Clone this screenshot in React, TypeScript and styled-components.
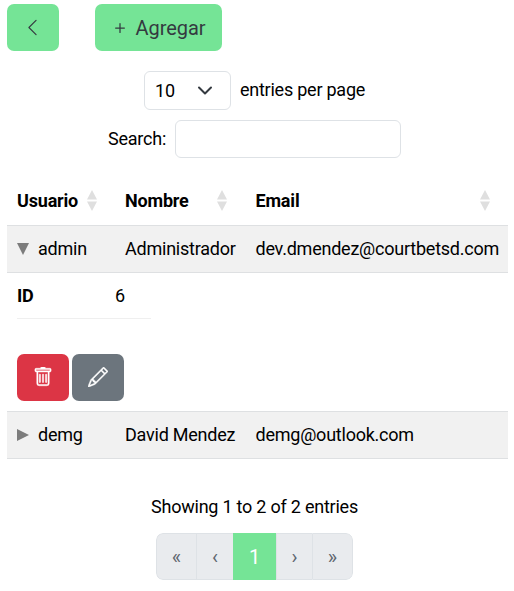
import React from "react";
import styled, { createGlobalStyle } from "styled-components";
import { BsChevronLeft, BsPlus, BsTrash, BsPencil } from "react-icons/bs";

const GlobalStyle = createGlobalStyle`
  *, *::before, *::after { box-sizing: border-box; }
  body {
    margin: 0;
    background: #fff;
    color: #000;
    font: 400 18px/27px Roboto, sans-serif;
    letter-spacing: -0.23px;
  }
`;

const Page = styled.main`
  width: 514px;
  height: 591px;
  padding: 4px 6px 0 7px;
  overflow: hidden;
`;

const Toolbar = styled.div`
  display: flex;
  gap: 36px;
`;

const Button = styled.button<{ $tone: string; $ink: string; $width: number }>`
  display: inline-flex;
  align-items: center;
  justify-content: center;
  gap: 5px;
  width: ${(p) => p.$width}px;
  height: 47px;
  padding: 0 1px 0 0;
  border: 0;
  border-radius: 7px;
  background: ${(p) => p.$tone};
  color: ${(p) => p.$ink};
  font: 400 20px/30px Roboto, sans-serif;
  letter-spacing: -0.05px;
`;

const ActionButton = styled(Button)`
  padding: 0 0 2px;

  svg {
    stroke: currentColor;
    stroke-width: 0.35px;
  }
`;

const Controls = styled.div`
  display: flex;
  flex-direction: column;
  align-items: center;
  gap: 10px;
  width: 495px;
  margin-top: 20px;
`;

const Control = styled.label`
  display: flex;
  align-items: center;
  gap: 9px;
`;

const ControlText = styled.span`
  padding-bottom: 2px;
`;

const LengthSelect = styled.span`
  display: flex;
  align-items: center;
  justify-content: space-between;
  width: 87px;
  height: 39px;
  padding: 0 17px 1px 10px;
  border: 1px solid #dee2e6;
  border-radius: 6px;
  letter-spacing: 0;
`;

const SearchInput = styled.input`
  width: 226px;
  height: 38px;
  border: 1px solid #dee2e6;
  border-radius: 6px;
  background: #fff;
`;

const Table = styled.div`
  width: 501px;
  margin-top: 19px;
`;

const Row = styled.div<{ $striped?: boolean }>`
  display: grid;
  grid-template-columns: 108px 130.5px 262.5px;
  height: 48px;
  border-top: 1px solid ${(p) => (p.$striped ? "#dee0e2" : "transparent")};
  border-bottom: ${(p) => (p.$striped ? "1px solid #dee0e2" : "0")};
  background: ${(p) => (p.$striped ? "#f1f1f1" : "#fff")};
`;

const Cell = styled.div`
  display: flex;
  align-items: center;
  padding: 0 10px 2px;
  white-space: nowrap;
`;

const HeadCell = styled(Cell)<{ $inset: number }>`
  justify-content: space-between;
  padding-right: ${(p) => p.$inset}px;
  font-weight: 700;
  letter-spacing: -0.18px;
`;

const Toggle = styled.svg`
  flex: none;
  margin-right: 9px;
  transform: translateY(1px);
`;

const Details = styled.div`
  height: 138px;
  padding: 0 10px;
`;

const DetailItem = styled.div`
  display: flex;
  width: 134px;
  height: 46px;
  padding-top: 9px;
  border-bottom: 1px solid #efefef;
`;

const DetailTitle = styled.strong`
  width: 98px;
  font-weight: 700;
`;

const Actions = styled.div`
  display: flex;
  gap: 3px;
  margin-top: 35px;
`;

const Footer = styled.footer`
  display: flex;
  flex-direction: column;
  align-items: center;
  width: 495px;
  margin-top: 34px;
`;

const Pagination = styled.nav`
  display: flex;
  width: 197px;
  height: 47px;
  margin-top: 13px;
  overflow: hidden;
  border-radius: 7px;
`;

const PageItem = styled.button<{ $active?: boolean; $width: number }>`
  width: ${(p) => p.$width}px;
  padding: 0;
  border: 1px solid ${(p) => (p.$active ? "#75e496" : "#dee2e6")};
  border-right-width: ${(p) => (p.$active ? 1 : 0)}px;
  background: ${(p) => (p.$active ? "#75e496" : "#e9ebee")};
  color: ${(p) => (p.$active ? "#fff" : "#5e666e")};
  font: 400 20px/30px Roboto, sans-serif;

  &:first-child { border-radius: 7px 0 0 7px; }
  &:last-child { border-right-width: 1px; border-radius: 0 7px 7px 0; }
`;

const SortIcon = () => (
  <svg width="10" height="21" viewBox="0 0 10 21" fill="#dfdfdf">
    <path d="M5 0 10 9.5H0zM0 11.5h10L5 21z" />
  </svg>
);

const columns = [
  { name: "Usuario", inset: 18 },
  { name: "Nombre", inset: 18.5 },
  { name: "Email", inset: 18 },
];

const users = [
  { user: "admin", name: "Administrador", email: "dev.dmendez@courtbetsd.com", id: "6", open: true },
  { user: "demg", name: "David Mendez", email: "demg@outlook.com", id: "7", open: false },
];

const pages = [
  { label: "«", width: 40 },
  { label: "‹", width: 37 },
  { label: "1", width: 43, active: true },
  { label: "›", width: 36 },
  { label: "»", width: 41 },
];

export default function App() {
  return (
    <>
      <GlobalStyle />
      <Page>
        <Toolbar>
          <Button $tone="#75e496" $ink="#343a40" $width={52} aria-label="Volver">
            <BsChevronLeft size={19} />
          </Button>
          <Button $tone="#75e496" $ink="#343a40" $width={127}>
            <BsPlus size={20} />
            Agregar
          </Button>
        </Toolbar>

        <Controls>
          <Control>
            <LengthSelect>
              10
              <svg width="16" height="16" viewBox="0 0 16 16" fill="none" stroke="#343a40" strokeWidth="2" strokeLinecap="round" strokeLinejoin="round">
                <path d="m2 5.5 6 6 6-6" />
              </svg>
            </LengthSelect>
            <ControlText>entries per page</ControlText>
          </Control>
          <Control>
            <ControlText>Search:</ControlText>
            <SearchInput type="search" aria-label="Search" />
          </Control>
        </Controls>

        <Table>
          <Row>
            {columns.map((c) => (
              <HeadCell key={c.name} $inset={c.inset}>
                {c.name}
                <SortIcon />
              </HeadCell>
            ))}
          </Row>
          {users.map((u) => (
            <React.Fragment key={u.user}>
              <Row $striped>
                <Cell>
                  <Toggle width="12" height="12" viewBox="0 0 12 12" fill="#7c7c7c">
                    <path d={u.open ? "M0 0h12L6 12z" : "M0 0l12 6-12 6z"} />
                  </Toggle>
                  {u.user}
                </Cell>
                <Cell>{u.name}</Cell>
                <Cell>{u.email}</Cell>
              </Row>
              {u.open && (
                <Details>
                  <DetailItem>
                    <DetailTitle>ID</DetailTitle>
                    {u.id}
                  </DetailItem>
                  <Actions>
                    <ActionButton $tone="#dc3545" $ink="#fff" $width={52} aria-label="Eliminar">
                      <BsTrash size={20} />
                    </ActionButton>
                    <ActionButton $tone="#6c757d" $ink="#fff" $width={52} aria-label="Editar">
                      <BsPencil size={20} />
                    </ActionButton>
                  </Actions>
                </Details>
              )}
            </React.Fragment>
          ))}
        </Table>

        <Footer>
          Showing 1 to 2 of 2 entries
          <Pagination>
            {pages.map((p) => (
              <PageItem key={p.label} $width={p.width} $active={p.active}>
                {p.label}
              </PageItem>
            ))}
          </Pagination>
        </Footer>
      </Page>
    </>
  );
}
